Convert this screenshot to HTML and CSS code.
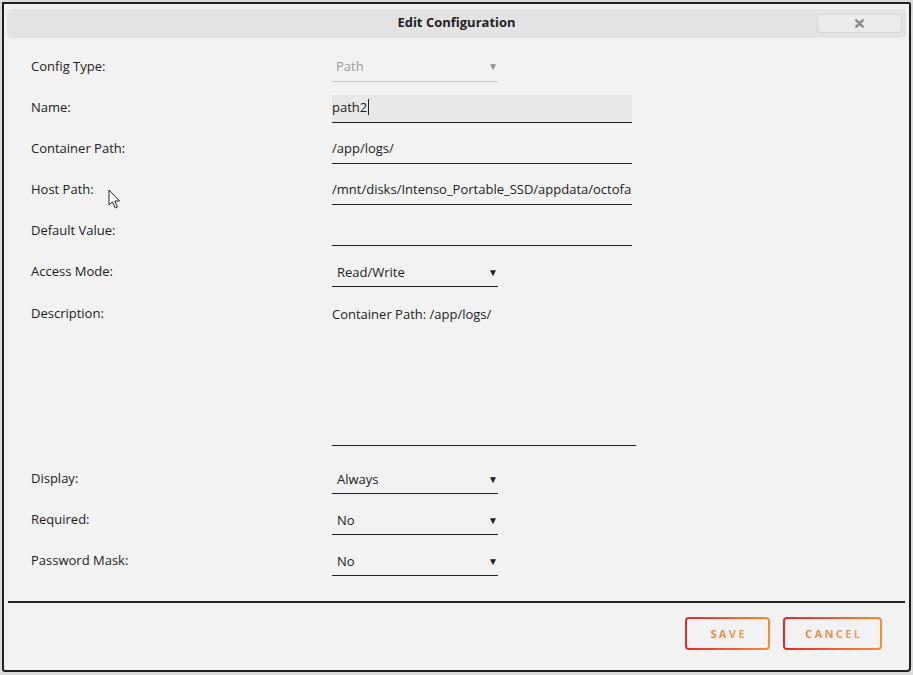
FILE: index.html
```html
<!DOCTYPE html>
<html>
<head>
<meta charset="utf-8">
<link rel="stylesheet" href="styles.css">
</head>
<body>
<div class="dialog">
  <div class="titlebar">
    <span class="title">Edit Configuration</span>
    <button class="close"><svg width="9" height="9" viewBox="0 0 9 9"><path d="M1.3 1.3L7.7 7.7M7.7 1.3L1.3 7.7" stroke="#8a8a8a" stroke-width="2.4" stroke-linecap="round"/></svg></button>
  </div>
  <div class="form">
    <div class="row">
      <div class="label">Config Type:</div>
      <div class="field select disabled"><span>Path</span><span class="arrow">&#9660;</span></div>
    </div>
    <div class="row">
      <div class="label">Name:</div>
      <div class="field input focused"><span>path2</span><span class="caret"></span></div>
    </div>
    <div class="row">
      <div class="label">Container Path:</div>
      <div class="field input"><span>/app/logs/</span></div>
    </div>
    <div class="row">
      <div class="label">Host Path:</div>
      <div class="field input"><span>/mnt/disks/Intenso_Portable_SSD/appdata/octofa</span></div>
    </div>
    <div class="row">
      <div class="label">Default Value:</div>
      <div class="field input"><span></span></div>
    </div>
    <div class="row gap1">
      <div class="label">Access Mode:</div>
      <div class="field select"><span>Read/Write</span><span class="arrow">&#9660;</span></div>
    </div>
    <div class="row tall">
      <div class="label">Description:</div>
      <div class="field textarea"><span>Container Path: /app/logs/</span></div>
    </div>
    <div class="row">
      <div class="label">Display:</div>
      <div class="field select"><span>Always</span><span class="arrow">&#9660;</span></div>
    </div>
    <div class="row gap1">
      <div class="label">Required:</div>
      <div class="field select"><span>No</span><span class="arrow">&#9660;</span></div>
    </div>
    <div class="row gap2">
      <div class="label">Password Mask:</div>
      <div class="field select"><span>No</span><span class="arrow">&#9660;</span></div>
    </div>
  </div>
  <div class="footer">
    <button class="btn save"><span>SAVE</span></button>
    <button class="btn cancel"><span>CANCEL</span></button>
  </div>
  <svg class="cursor" width="14" height="22" viewBox="0 0 14 22"><path d="M1 1L1 16L4.5 12.8L7.2 19L9.4 18L6.8 12L11.5 12Z" fill="#fff" stroke="#222" stroke-width="1" stroke-linejoin="round"/></svg>
</div>
</body>
</html>
```
FILE: styles.css
```css
html, body {
  margin: 0;
  padding: 0;
  background: #dcdcdc;
  font-family: "Open Sans", "Noto Sans", sans-serif;
  font-size: 13px;
  color: #222;
}
.dialog {
  position: relative;
  box-sizing: border-box;
  margin: 2px 0 0 2px;
  width: 909px;
  height: 670px;
  background: #f2f2f2;
  border: 2px solid #1f1f1f;
  border-radius: 0 2px 4px 3px;
  padding: 5px 3px 0 3px;
}
.titlebar {
  position: relative;
  box-sizing: border-box;
  height: 29px;
  padding-bottom: 3px;
  background: #e3e3e3;
  border-radius: 4px;
  display: flex;
  align-items: center;
  justify-content: center;
}
.title {
  font-weight: bold;
  font-size: 13px;
  color: #222;
}
.close {
  position: absolute;
  right: 4px;
  top: 5px;
  width: 85px;
  height: 19px;
  box-sizing: border-box;
  background: #ececec;
  border: 1px solid #d6d6d6;
  border-radius: 4px;
  padding: 0;
  display: flex;
  align-items: center;
  justify-content: center;
}
.form {
  padding: 16px 0 0 24px;
  height: 563px;
  box-sizing: border-box;
}
.row {
  display: flex;
  align-items: flex-start;
  margin-bottom: 13px;
}
.row.gap1 { margin-top: 1px; }
.row.gap2 { margin-top: 2px; }
.label {
  width: 301px;
  flex: none;
  height: 28px;
  line-height: 25px;
  color: #222;
}
.field {
  box-sizing: border-box;
  height: 28px;
  display: flex;
  align-items: center;
  padding-bottom: 3px;
  border-bottom: 1px solid #222;
  font-size: 13px;
  color: #222;
}
.input {
  width: 300px;
  overflow: hidden;
  white-space: nowrap;
}
.input.focused {
  background: #e8e8e8;
}
.caret {
  display: inline-block;
  width: 1px;
  height: 16px;
  background: #222;
  margin-left: 1px;
}
.select {
  width: 166px;
  justify-content: space-between;
  padding: 0 0 1px 5px;
}
.select.disabled {
  color: #999;
  border-bottom-color: #c8c8c8;
  padding-left: 4px;
  padding-bottom: 3px;
}
.arrow {
  font-size: 10px;
  color: #222;
}
.disabled .arrow { color: #999; }
.row.tall {
  margin-bottom: 20px;
}
.row.tall .label { line-height: 26px; }
.textarea {
  width: 304px;
  height: 146px;
  align-items: flex-start;
  padding-top: 5px;
}
.footer {
  border-top: 2px solid #222;
  margin: 0 1px;
  display: flex;
  justify-content: flex-end;
  gap: 13px;
  padding: 14px 23px 0 0;
}
.btn {
  box-sizing: border-box;
  height: 33px;
  border: 2px solid transparent;
  border-radius: 4px;
  background: linear-gradient(#f2f2f2, #f2f2f2) padding-box, linear-gradient(90deg, #e22828, #ff8b2d) border-box;
  font-family: "Open Sans", "Noto Sans", sans-serif;
  font-weight: bold;
  font-size: 11px;
  letter-spacing: 2.4px;
  padding: 0;
  display: flex;
  align-items: center;
  justify-content: center;
}
.btn span {
  background: linear-gradient(90deg, #f57b3a, #ff9a4a);
  -webkit-background-clip: text;
  background-clip: text;
  color: transparent;
  margin-right: -2.4px;
}
.save { width: 85px; }
.cancel { width: 99px; }
.cursor {
  position: absolute;
  left: 104px;
  top: 185px;
}
```
